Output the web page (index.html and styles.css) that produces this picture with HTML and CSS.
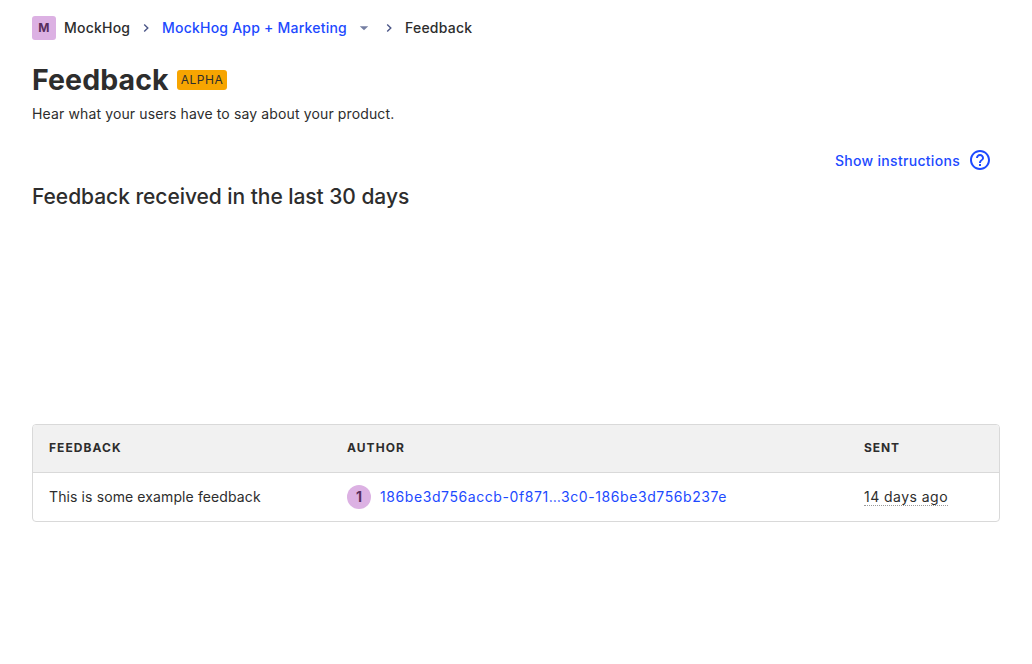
FILE: index.html
```
<!DOCTYPE html>
<html lang="en">
<head>
<meta charset="utf-8">
<title>Feedback</title>
<link rel="stylesheet" href="styles.css">
</head>
<body>
<main class="page">
  <nav class="crumbs">
    <span class="lettermark">M</span>
    <span class="crumb crumb-org">MockHog</span>
    <svg class="chevron" width="16" height="16" viewBox="0 0 16 16"><path d="M6.200 4.500 9.800 8l-3.600 3.500"/></svg>
    <a class="crumb crumb-link">MockHog App + Marketing</a>
    <svg class="caret" width="16" height="16" viewBox="0 0 16 16"><path d="M3.800 6.200 8 10.200l4.200-4z"/></svg>
    <svg class="chevron" width="16" height="16" viewBox="0 0 16 16"><path d="M6.200 4.500 9.800 8l-3.600 3.500"/></svg>
    <span class="crumb">Feedback</span>
  </nav>
  <header class="title-row">
    <h1 class="title">Feedback</h1>
    <span class="tag">ALPHA</span>
  </header>
  <p class="caption">Hear what your users have to say about your product.</p>
  <div class="actions">
    <a class="instructions"><span class="instructions-label">Show instructions</span>
      <svg class="help" width="24" height="24" viewBox="0 0 24 24"><path d="M11 18h2v-2h-2v2zm1-16C6.480 2 2 6.480 2 12s4.480 10 10 10 10-4.480 10-10S17.520 2 12 2zm0 18c-4.410 0-8-3.590-8-8s3.590-8 8-8 8 3.590 8 8-3.590 8-8 8zm0-14c-2.210 0-4 1.790-4 4h2c0-1.100.9-2 2-2s2 .9 2 2c0 2-3 1.750-3 5h2c0-2.250 3-2.500 3-5 0-2.210-1.790-4-4-4z"/></svg>
    </a>
  </div>
  <h3 class="subtitle">Feedback received in the last 30 days</h3>
  <div class="chart"></div>
  <table class="table">
    <colgroup><col class="col-feedback"><col class="col-author"><col></colgroup>
    <thead><tr><th>FEEDBACK</th><th>AUTHOR</th><th class="th-sent">SENT</th></tr></thead>
    <tbody><tr>
      <td>This is some example feedback</td>
      <td><div class="person"><span class="avatar">1</span><a class="person-link">186be3d756accb-0f871…3c0-186be3d756b237e</a></div></td>
      <td><span class="ago">14 days ago</span></td>
    </tr></tbody>
  </table>
</main>
</body>
</html>
```
FILE: styles.css
```
* { box-sizing: border-box; }
body { margin: 0; background: #fff; color: #2d2d2d; font: 14px/20px Inter, sans-serif; }
.page { padding: 16px 32px 0; }
.crumbs { display: flex; align-items: center; height: 24px; font-weight: 500; letter-spacing: .22px; }
.lettermark { width: 24px; height: 24px; border-radius: 3px; background: #dcb1e3; color: #572e5e; font-size: 12px; font-weight: 700; line-height: 24px; text-align: center; }
.crumb-org { width: 66px; margin-left: 8px; white-space: nowrap; }
.chevron { margin: 0 8px; fill: none; stroke: #4b5687; stroke-width: 1.4; }
.crumb-link { width: 185px; white-space: nowrap; }
.crumb-link, .instructions, .person-link { color: #1d4aff; }
.caret { margin: 0 1px 0 9px; fill: #747ea2; }
.title-row { display: flex; align-items: center; gap: 8px; margin-top: 22px; height: 36px; }
.title { width: 137px; margin: 0; font-size: 28.500px; font-weight: 700; letter-spacing: .1px; line-height: 36px; }
.tag { width: 50px; height: 20px; border-radius: 3px; background: #f7a501; font-size: 12px; font-weight: 400; letter-spacing: .5px; line-height: 20px; text-align: center; }
.caption { margin: 6px 0 0; letter-spacing: .13px; }
.actions { display: flex; justify-content: flex-end; margin-top: 16px; height: 40px; padding-right: 8px; }
.instructions { display: flex; align-items: center; gap: 8px; font-weight: 500; letter-spacing: .3px; }
.instructions-label { padding-top: 2px; }
.help { fill: currentColor; }
.subtitle { margin: 4px 0 0; font-size: 21px; font-weight: 500; letter-spacing: -.05px; line-height: 26px; }
.chart { height: 214px; }
.table { width: 968px; border: 1px solid #d9d9d9; border-radius: 4px; border-spacing: 0; table-layout: fixed; overflow: hidden; }
.col-feedback { width: 298px; }
.col-author { width: 517px; }
.table th { height: 47px; padding: 0 16px 2px; background: #f1f1f1; font-size: 12px; font-weight: 700; letter-spacing: 1.05px; text-align: left; }
.table .th-sent { letter-spacing: .9px; }
.table td { height: 49px; padding: 0 16px; border-top: 1px solid #d9d9d9; letter-spacing: .11px; }
.person { display: flex; align-items: center; gap: 9px; }
.person-link { letter-spacing: .58px; }
.avatar { width: 24px; height: 24px; border-radius: 50%; background: #dcb1e3; color: #572e5e; font-weight: 700; line-height: 24px; text-align: center; }
.ago { border-bottom: 1px dotted #999; letter-spacing: .46px; }
```
